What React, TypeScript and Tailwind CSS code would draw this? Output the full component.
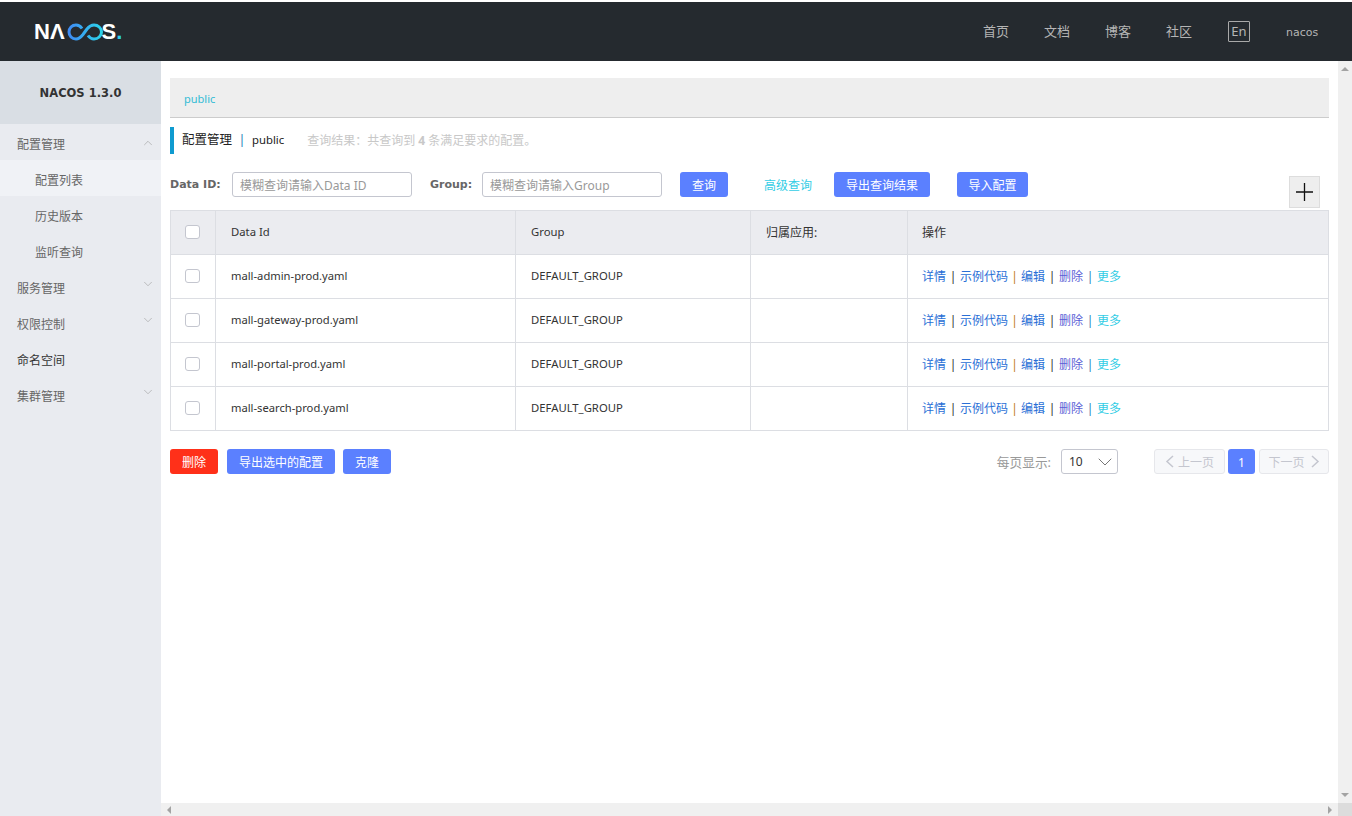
import React from 'react';
import { ChevronDown, ChevronUp } from 'lucide-react';

const rows = ['mall-admin-prod.yaml', 'mall-gateway-prod.yaml', 'mall-portal-prod.yaml', 'mall-search-prod.yaml'];

const Logo = () => (
  <div className="flex items-center ml-[34px] text-white font-bold text-[22px] leading-none font-['Liberation_Sans',sans-serif]">
    <span>N</span>
    <span>Λ</span>
    <svg width="37" height="18" viewBox="0 0 37 18" fill="none" className="ml-[2px]">
      <defs>
        <linearGradient id="logoGrad" x1="0" x2="1" y1="0" y2="0">
          <stop offset="0" stopColor="#3f8cf5" />
          <stop offset="1" stopColor="#2cd3ea" />
        </linearGradient>
      </defs>
      <path
        d="M15 5.500C13.500 3.300 11.500 2 9 2 5 2 2 5 2 9s3 7 7 7c3 0 5-2 7-4.500l4-5.500C22 3.500 24.500 2 27 2c4 0 7.500 3 7.500 7s-3.500 7-7.500 7c-2.500 0-4.500-1.300-6-3.500"
        stroke="url(#logoGrad)"
        strokeWidth="3"
      />
    </svg>
    <span className="-ml-[2px]">S</span>
    <span className="text-[#2cd3ea]">.</span>
  </div>
);

const Header = () => (
  <div className="h-[59px] shrink-0 bg-[#252a2f] flex items-center">
    <Logo />
    <div className="ml-auto flex items-center text-[13px] text-[#b5b5b5]">
      <span>首页</span>
      <span className="ml-[35px]">文档</span>
      <span className="ml-[35px]">博客</span>
      <span className="ml-[35px]">社区</span>
      <span className="ml-[36px] w-[22px] h-[21px] border border-[#a9a9a9] rounded-[1px] flex items-center justify-center text-[13px]">En</span>
      <span className="ml-[36px] mr-[33px] w-[33px] pt-[3px] text-[11px] font-['DejaVu_Sans',sans-serif]">nacos</span>
    </div>
  </div>
);

const MenuItem = ({ label, open, noArrow, dark }: { label: string; open?: boolean; noArrow?: boolean; dark?: boolean }) => (
  <div className={`h-[36px] pt-[6px] pl-[17px] pr-[6px] flex items-center text-[12px] ${dark ? 'text-[#333]' : 'text-[#666]'}`}>
    <span>{label}</span>
    {!noArrow && (
      <span className={`ml-auto text-[#999] ${open ? 'mb-[4px]' : 'mb-[10px]'}`}>
        {open ? <ChevronUp size={14} strokeWidth={1} /> : <ChevronDown size={14} strokeWidth={1} />}
      </span>
    )}
  </div>
);

const SubItem = ({ label, active }: { label: string; active?: boolean }) => (
  <div className={`h-[36px] pt-[6px] pl-[35px] flex items-center text-[12px] text-[#666] ${active ? 'bg-[#f0f2f6]' : ''}`}>{label}</div>
);

const Sidebar = () => (
  <div className="w-[161px] shrink-0 bg-[#e9ebf0]">
    <div className="h-[63px] pt-[2px] bg-[#d9dee4] flex items-center justify-center font-bold text-[#333] font-['DejaVu_Sans',sans-serif] text-[11.5px]">
      NACOS 1.3.0
    </div>
    <MenuItem label="配置管理" open />
    <SubItem label="配置列表" active />
    <SubItem label="历史版本" />
    <SubItem label="监听查询" />
    <MenuItem label="服务管理" />
    <MenuItem label="权限控制" />
    <MenuItem label="命名空间" noArrow dark />
    <MenuItem label="集群管理" />
  </div>
);

const Btn = ({ children, w, red }: { children: React.ReactNode; w: string; red?: boolean }) => (
  <button type="button" className={`${w} h-[25px] pt-[2px] rounded-[3px] text-white text-[12px] flex items-center justify-center shrink-0 ${red ? 'bg-[#ff3019]' : 'bg-[#5b80ff]'}`}>
    {children}
  </button>
);

const Check = () => <span className="block w-[15px] h-[14px] mb-[2px] rounded-[3px] bg-white border border-[#c4c6cf]" />;

const Sep = ({ color, w }: { color: string; w: string }) => <span className={`${w} text-center ${color}`}>|</span>;

const Actions = () => (
  <div className="flex items-center text-[12px]">
    <span className="text-[#2a6fd6]">详情</span>
    <Sep w="w-[14px]" color="text-[#333]" />
    <span className="text-[#2a6fd6]">示例代码</span>
    <Sep w="w-[13px]" color="text-[#c07a20]" />
    <span className="text-[#2a6fd6]">编辑</span>
    <Sep w="w-[14px]" color="text-[#333]" />
    <span className="text-[#5b5fd6]">删除</span>
    <Sep w="w-[14px]" color="text-[#1d7fb8]" />
    <span className="text-[#33cde5]">更多</span>
  </div>
);

const ConfigTable = () => (
  <table className="w-[1159px] table-fixed border-collapse border border-[#dcdee3] text-[12px] text-[#333]">
    <colgroup>
      <col className="w-[45px]" />
      <col className="w-[300px]" />
      <col className="w-[235px]" />
      <col className="w-[157px]" />
      <col />
    </colgroup>
    <thead>
      <tr className="h-[44px] bg-[#ebecf0] text-left">
        <th className="border border-[#dcdee3] pl-[14px] font-normal"><Check /></th>
        <th className="border border-[#dcdee3] pl-[15px] font-normal text-[11.3px]">Data Id</th>
        <th className="border border-[#dcdee3] pl-[15px] font-normal text-[11.3px]">Group</th>
        <th className="border border-[#dcdee3] pl-[15px] font-normal">归属应用:</th>
        <th className="border border-[#dcdee3] pl-[14px] font-normal">操作</th>
      </tr>
    </thead>
    <tbody>
      {rows.map((name) => (
        <tr key={name} className="h-[44px]">
          <td className="border border-[#dcdee3] pl-[14px]"><Check /></td>
          <td className="border border-[#dcdee3] pl-[15px] text-[11.2px]">{name}</td>
          <td className="border border-[#dcdee3] pl-[15px] text-[11.3px]">DEFAULT_GROUP</td>
          <td className="border border-[#dcdee3]"></td>
          <td className="border border-[#dcdee3] pl-[14px]"><Actions /></td>
        </tr>
      ))}
    </tbody>
  </table>
);

const PageArrow = ({ d }: { d: string }) => (
  <svg width="9" height="13" viewBox="0 0 9 13" fill="none">
    <path d={d} stroke="#c4c6cf" strokeWidth="1.500" />
  </svg>
);

const Content = () => (
  <div className="flex-1 min-w-0 px-[9px] pt-[17px]">
    <div className="h-[40px] bg-[#eeeeee] border-b border-[#cccccc] pl-[14px] pt-[3px] flex items-center text-[11px] text-[#33bcd5]">public</div>
    <div className="mt-[9px] h-[27px] border-l-[4px] border-[#0f9bd0] pl-[8px] flex items-center text-[12.5px] text-[#222]">
      <span>配置管理</span>
      <span className="w-[20px] text-center text-[#1d7fb8]">|</span>
      <span className="text-[11.3px]">public</span>
      <span className="ml-[23px] text-[12px] text-[#c8c8c8]">查询结果：共查询到 <b>4</b> 条满足要求的配置。</span>
    </div>
    <div className="mt-[18px] h-[38px] flex items-start text-[12px]">
      <label className="h-[25px] pt-[2px] w-[62px] flex items-center font-bold text-[#666] text-[11px] font-['DejaVu_Sans',sans-serif]">Data ID:</label>
      <div className="w-[180px] h-[25px] pt-[2px] border border-[#c4c6cf] rounded-[3px] pl-[7px] flex items-center text-[#999]">模糊查询请输入Data ID</div>
      <label className="ml-[18px] h-[25px] pt-[2px] w-[52px] flex items-center font-bold text-[#666] text-[11px] font-['DejaVu_Sans',sans-serif]">Group:</label>
      <div className="w-[180px] h-[25px] pt-[2px] border border-[#c4c6cf] rounded-[3px] pl-[7px] flex items-center text-[#999]">模糊查询请输入Group</div>
      <div className="ml-[18px]"><Btn w="w-[48px]">查询</Btn></div>
      <span className="ml-[36px] h-[25px] pt-[2px] flex items-center text-[#33cde5]">高级查询</span>
      <div className="ml-[22px]"><Btn w="w-[96px]">导出查询结果</Btn></div>
      <div className="ml-[27px]"><Btn w="w-[71px]">导入配置</Btn></div>
      <div className="ml-auto mr-[9px] mt-[4px] w-[31px] h-[32px] bg-[#eeeeee] border border-[#dddddd] flex items-center justify-center">
        <svg width="17" height="18" viewBox="0 0 17 18"><path d="M0 9h17M8.500 0v18" stroke="#111" strokeWidth="1.300" /></svg>
      </div>
    </div>
    <ConfigTable />
    <div className="mt-[18px] flex items-center text-[12px]">
      <Btn w="w-[48px]" red>删除</Btn>
      <div className="ml-[9px]"><Btn w="w-[108px]">导出选中的配置</Btn></div>
      <div className="ml-[8px]"><Btn w="w-[48px]">克隆</Btn></div>
      <span className="ml-auto pt-[2px] text-[12.7px] text-[#999]">每页显示:</span>
      <div className="ml-[10px] w-[57px] h-[25px] border border-[#c4c6cf] rounded-[3px] pl-[7px] flex items-center justify-between text-[#333]">
        <span>10</span>
        <ChevronDown size={24} strokeWidth={1} className="text-[#777]" />
      </div>
      <div className="ml-[36px] w-[71px] h-[25px] bg-[#f7f8fa] border border-[#e6e7eb] rounded-[3px] flex items-center justify-center gap-[4px] text-[#c4c6cf]">
        <PageArrow d="M8 1 2 6.500 8 12" />
        <span className="pt-[2px]">上一页</span>
      </div>
      <div className="ml-[3px] w-[27px] h-[25px] pt-[2px] bg-[#5b80ff] rounded-[3px] flex items-center justify-center text-white">1</div>
      <div className="ml-[4px] w-[70px] h-[25px] bg-[#f7f8fa] border border-[#e6e7eb] rounded-[3px] flex items-center justify-center gap-[6px] text-[#c4c6cf]">
        <span className="pt-[2px]">下一页</span>
        <PageArrow d="M1 1 7 6.500 1 12" />
      </div>
    </div>
  </div>
);

const VScrollbar = () => (
  <div className="w-[14px] shrink-0 bg-[#f0f0f0] flex flex-col items-center justify-between py-[6px]">
    <span className="w-0 h-0 border-x-[4px] border-x-transparent border-b-[4px] border-b-[#a3a3a3]" />
    <span className="w-0 h-0 border-x-[4px] border-x-transparent border-t-[4px] border-t-[#a3a3a3]" />
  </div>
);

const HScrollbar = () => (
  <div className="h-[13px] shrink-0 flex">
    <div className="flex-1 bg-[#f0f0f0] flex items-center justify-between px-[6px]">
      <span className="w-0 h-0 border-y-[4px] border-y-transparent border-r-[4px] border-r-[#a3a3a3]" />
      <span className="w-0 h-0 border-y-[4px] border-y-transparent border-l-[4px] border-l-[#a3a3a3]" />
    </div>
    <div className="w-[14px] bg-[#dcdcdc]" />
  </div>
);

export default function App() {
  return (
    <div className="w-[1352px] h-[816px] overflow-hidden flex flex-col bg-white pt-[2px] font-['Noto_Sans','Noto_Sans_CJK_SC',sans-serif]">
      <Header />
      <div className="flex-1 min-h-0 flex">
        <Sidebar />
        <div className="flex-1 min-w-0 flex flex-col">
          <div className="flex-1 min-h-0 flex">
            <Content />
            <VScrollbar />
          </div>
          <HScrollbar />
        </div>
      </div>
    </div>
  );
}
